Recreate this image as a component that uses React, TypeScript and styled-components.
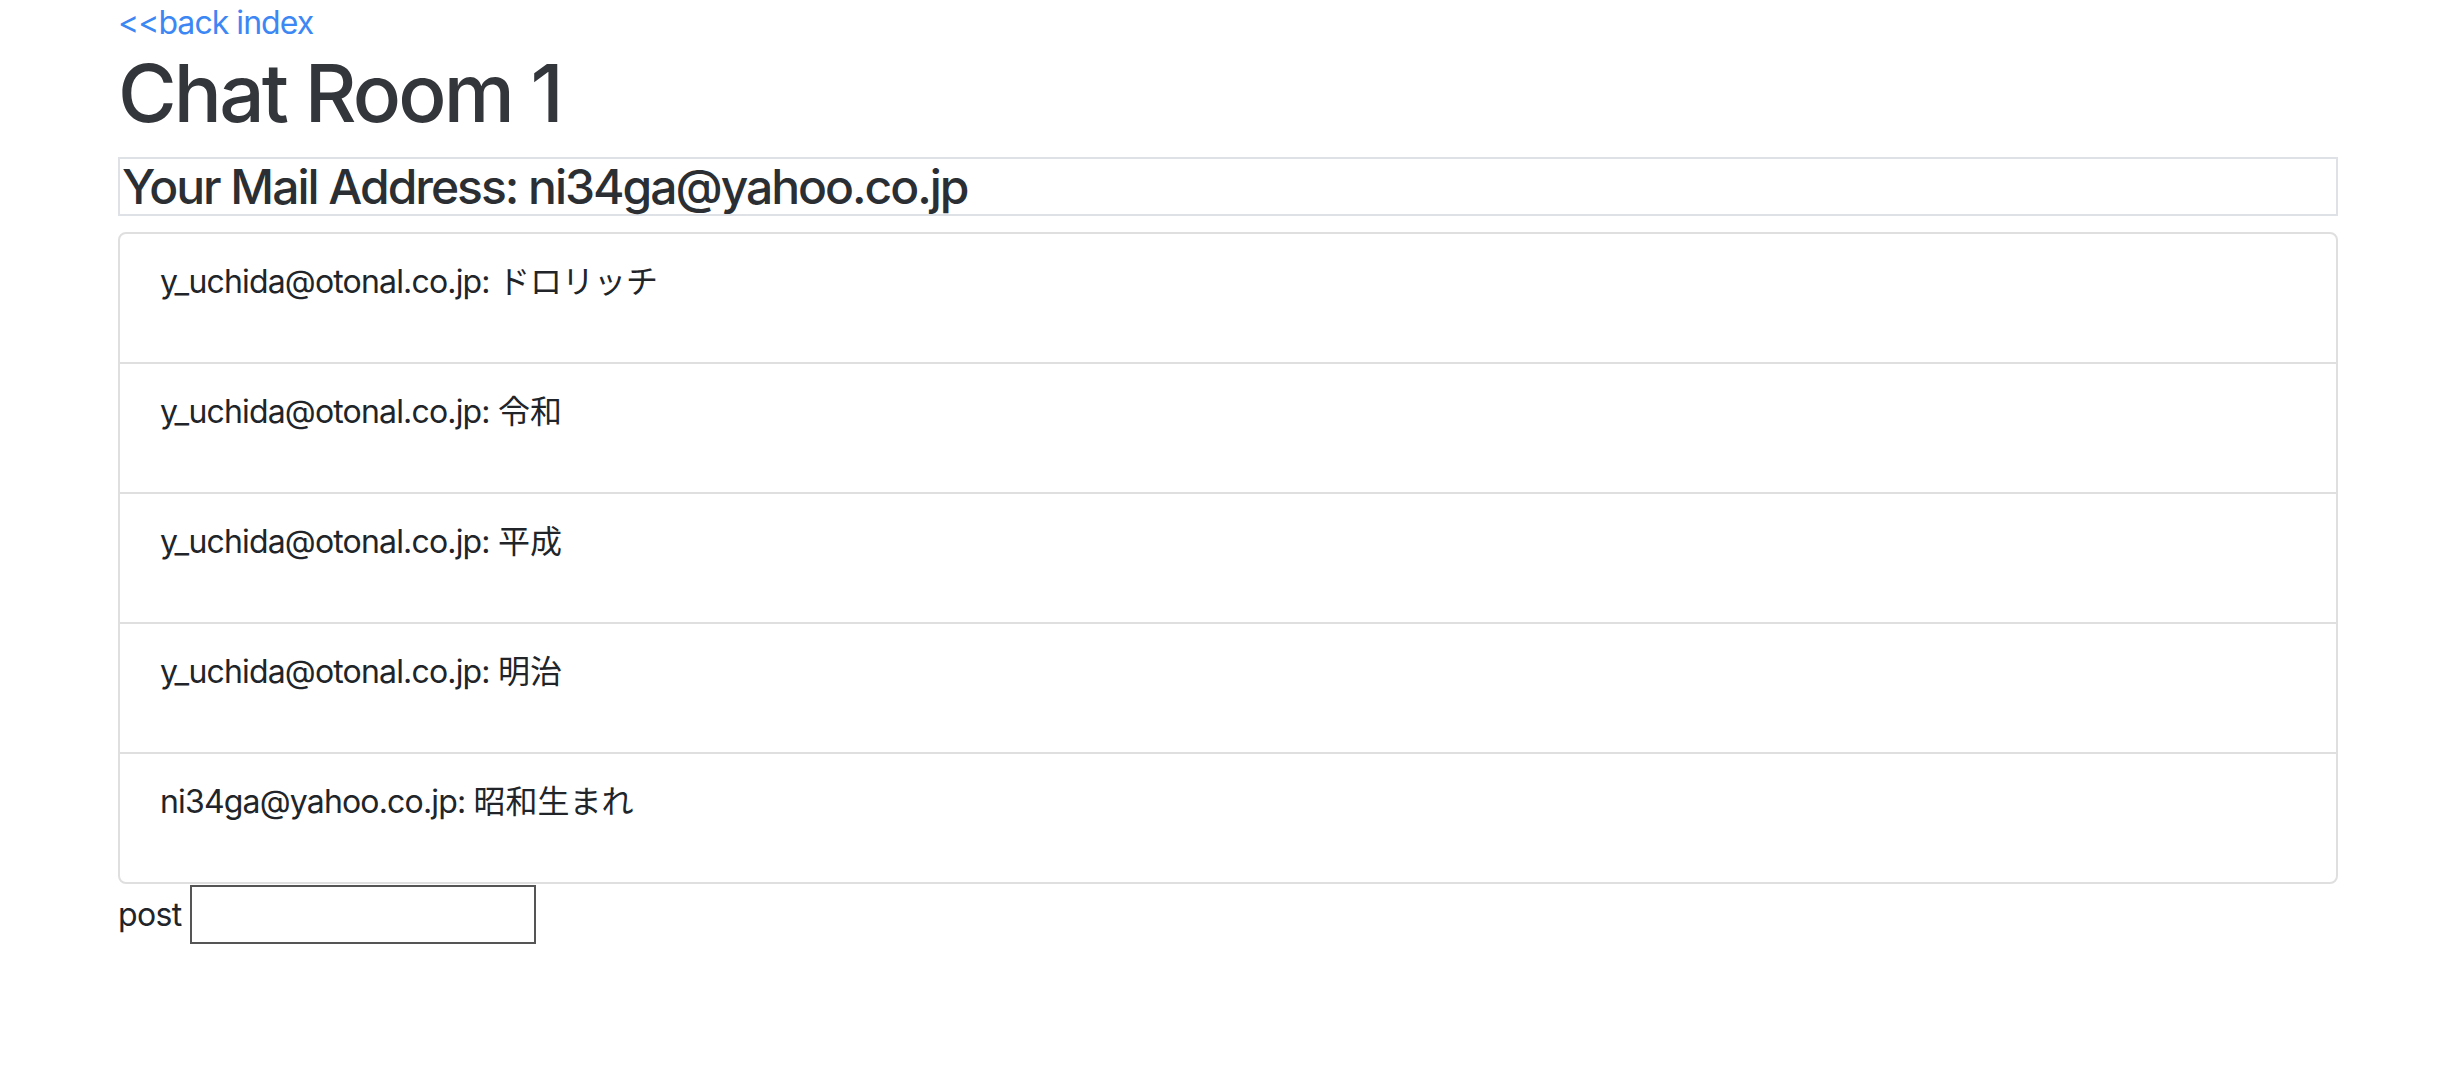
import React from "react";
import styled, { createGlobalStyle } from "styled-components";

const GlobalStyle = createGlobalStyle`
  html, body {
    margin: 0;
    padding: 0;
    background: #ffffff;
  }
  body {
    font-family: Inter, "Noto Sans CJK JP", "Liberation Sans", sans-serif;
    font-size: 32px;
    line-height: 1.5;
    color: #212529;
  }
  * { box-sizing: border-box; }
`;

const Container = styled.div`
  max-width: 2280px;
  margin: 0 auto;
  padding: 0 30px;
`;

const BackLink = styled.a`
  display: block;
  color: #3d87f5;
  text-decoration: none;
  line-height: 45px;
  letter-spacing: -0.03em;
`;

const Title = styled.h1`
  margin: 0 0 16px;
  font-size: 80px;
  font-weight: 500;
  line-height: 96px;
  color: #33363b;
  letter-spacing: -0.035em;
`;

const MailBox = styled.h4`
  margin: 0 0 16px;
  border: 2px solid #dee2e6;
  font-size: 48px;
  font-weight: 500;
  line-height: 55px;
  color: #2b2f33;
  padding: 0 2px;
  letter-spacing: -0.042em;
`;

const MessageList = styled.ul`
  list-style: none;
  margin: 0;
  padding: 0;
  border: 2px solid #dfdfdf;
  border-radius: 8px;
  overflow: hidden;
`;

const MessageItem = styled.li`
  padding: 24px 40px;
  & + & {
    border-top: 2px solid #dfdfdf;
  }
`;

const MessageText = styled.p`
  margin: 0 0 32px;
  line-height: 48px;
`;

const Sender = styled.span`
  letter-spacing: -0.026em;
`;

const PostForm = styled.form`
  display: flex;
  align-items: center;
  gap: 8px;
  margin-top: 1px;
`;

const PostLabel = styled.label`
  line-height: 48px;
  letter-spacing: -0.02em;
`;

const PostInput = styled.input`
  width: 346px;
  height: 59px;
  border: 2px solid #555555;
  border-radius: 0;
  padding: 2px 4px;
  font-size: 26px;
  background: #ffffff;
  outline: none;
`;

const messages = [
  { from: "y_uchida@otonal.co.jp", text: "ドロリッチ" },
  { from: "y_uchida@otonal.co.jp", text: "令和" },
  { from: "y_uchida@otonal.co.jp", text: "平成" },
  { from: "y_uchida@otonal.co.jp", text: "明治" },
  { from: "ni34ga@yahoo.co.jp", text: "昭和生まれ" },
];

export default function App() {
  return (
    <>
      <GlobalStyle />
      <Container>
        <BackLink href="#">&lt;&lt;back index</BackLink>
        <Title>Chat Room 1</Title>
        <MailBox>Your Mail Address: ni34ga@yahoo.co.jp</MailBox>
        <MessageList>
          {messages.map((m, i) => (
            <MessageItem key={i}>
              <MessageText>
                <Sender>{m.from}: </Sender>
                {m.text}
              </MessageText>
            </MessageItem>
          ))}
        </MessageList>
        <PostForm onSubmit={(e) => e.preventDefault()}>
          <PostLabel htmlFor="post">post</PostLabel>
          <PostInput id="post" type="text" />
        </PostForm>
      </Container>
    </>
  );
}
